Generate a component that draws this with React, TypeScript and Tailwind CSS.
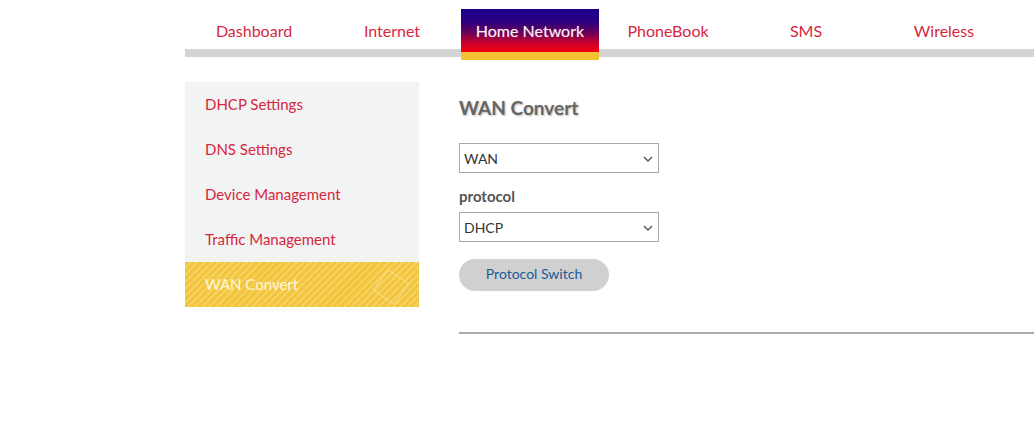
import React from "react";

const font = { fontFamily: '"Source Sans Pro", Lato, "Open Sans", sans-serif' };

const tabs = ["Dashboard", "Internet", "Home Network", "PhoneBook", "SMS", "Wireless"];
const side = ["DHCP Settings", "DNS Settings", "Device Management", "Traffic Management", "WAN Convert"];

function Chevron() {
  return (
    <svg width="10" height="6" viewBox="0 0 10 6" className="absolute right-[5px] top-[12px]">
      <path d="M1 1 L5 5 L9 1" fill="none" stroke="#555" strokeWidth="1.4" />
    </svg>
  );
}

function Select({ value }: { value: string }) {
  return (
    <div className="relative w-[200px] h-[30px] border border-[#a9a9a9] bg-white flex items-center pl-[4px] text-[14px] text-[#333]">
      {value}
      <Chevron />
    </div>
  );
}

export default function App() {
  return (
    <div className="w-[1034px] h-[428px] bg-white overflow-hidden font-[Lato]" style={font}>
      <div className="pl-[185px] pt-[9px]">
        <div className="relative h-[51px]">
          <div className="absolute left-0 right-0 top-[40px] h-[8px] bg-[#d4d4d4]" />
          <div className="relative flex">
            {tabs.map((t) =>
              t === "Home Network" ? (
                <div key={t} className="w-[138px] h-[51px] flex flex-col">
                  <div className="h-[43px] flex items-center justify-center text-[16px] text-[#fdf0f4] bg-[linear-gradient(to_bottom,#1b008c_0%,#2a0080_30%,#6a0058_55%,#d0002a_80%,#f00010_100%)] [text-shadow:0_0_1px_rgba(255,255,255,0.4)]">
                    {t}
                  </div>
                  <div className="h-[8px] bg-[#f2c230]" />
                </div>
              ) : (
                <div key={t} className="w-[138px] h-[43px] flex items-center justify-center text-[16px] text-[#d6273f]">
                  {t}
                </div>
              )
            )}
          </div>
        </div>
      </div>

      <div className="flex pl-[185px] pt-[22px]">
        <div className="w-[234px] bg-[#f2f3f3] self-start">
          {side.map((s) =>
            s === "WAN Convert" ? (
              <div
                key={s}
                className="relative h-[45px] flex items-center pl-[20px] text-[15px] text-[#fff7dc] bg-[#f2c53a] bg-[repeating-linear-gradient(135deg,#f2c53a_0px,#f2c53a_3px,#f6d265_3px,#f6d265_5px)] overflow-hidden"
              >
                {s}
                <div className="absolute left-[193px] top-[12px] w-[26px] h-[26px] rotate-[35deg] border border-[#f9de8a]" />
              </div>
            ) : (
              <div key={s} className="h-[45px] flex items-center pl-[20px] text-[15px] text-[#d6273f]">
                {s}
              </div>
            )
          )}
        </div>

        <div className="flex-1 pl-[40px]">
          <div className="pt-[12px] h-[61px] text-[19px] font-bold text-[#666] [text-shadow:1px_1px_2px_#bbb]">WAN Convert</div>
          <Select value="WAN" />
          <div className="pt-[11px] pb-[4px] h-[39px] flex items-center text-[15px] font-bold text-[#555]">protocol</div>
          <Select value="DHCP" />
          <div className="pt-[17px]">
            <button className="w-[150px] h-[32px] rounded-full bg-[#d0d0d0] text-[14px] text-[#1a5a96] pb-[3px]">Protocol Switch</button>
          </div>
          <div className="mt-[41px] h-[2px] bg-[#aaaaaa]" />
        </div>
      </div>
    </div>
  );
}
